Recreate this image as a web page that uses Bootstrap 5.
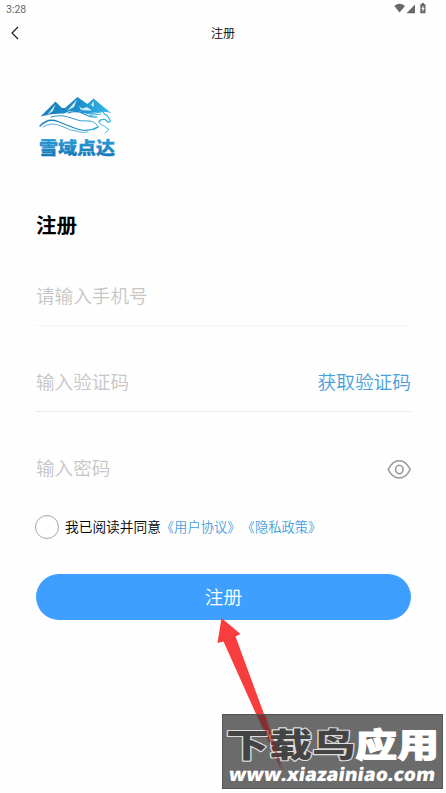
<!DOCTYPE html>
<html lang="zh-CN">
<head>
<meta charset="utf-8">
<meta name="viewport" content="width=device-width, initial-scale=1">
<title>注册</title>
<link href="https://cdn.jsdelivr.net/npm/bootstrap@5.3.0/dist/css/bootstrap.min.css" rel="stylesheet">
<style>
body{font-family:"Noto Sans CJK SC",sans-serif;font-weight:350;background:#fefefe;color:#000;height:793px;overflow:hidden}
.status{height:17px;padding:0 18px 0 6px;font:10.5px/18px Roboto,sans-serif;color:#686868}
.status span{padding-top:2px}
.topbar{height:32px;padding:0 9px}
.topbar .back,.topbar .spacer{width:12px}
.topbar h1{font-size:12px;line-height:32px;font-weight:350}
.page{padding:46px 35px 0 36px}
.brand{width:82px;height:66px}
.title{font-size:20.5px;line-height:30px;font-weight:700;margin-top:48px}
.field{height:86px;border-bottom:1px solid #f4f4f4;padding-top:41px}
.field.first{margin-top:1px}
.field.code{border-color:#e8e8e8}
.field.pass{border-color:#fafafa}
.field input{font-size:18.6px;line-height:28px;height:28px;color:#333;font-weight:350}
.field input::placeholder{color:#c6c6c6;opacity:1}
.send{font-size:18.7px;line-height:28px;color:#479fdb}
.agree{font-size:13.7px;line-height:22px;height:24px;margin-top:17px;font-kerning:none;font-feature-settings:"chws" 0,"halt" 0;text-spacing-trim:space-all}
.agree input{width:24px;height:24px;margin:0 6px 0 -1px;border:1px solid #a5a5a5;background:#fff}
.agree label{padding-bottom:2px}
.agree .term{display:inline-block;color:#479fdb;font-size:13.3px}
.agree .term+.term{margin-left:1px}
.submit{height:46px;margin:35px 0 0;padding:0 0 2px;background:#3e9fff;color:#fff;font-size:18.7px;line-height:28px;font-weight:350}
.submit:hover{background:#3494f4;color:#fff}
.pointer{left:210px;top:610px;width:80px;height:170px;pointer-events:none}
.watermark{left:222px;top:714px;width:221px;height:75px;background:rgba(70,70,70,.8);border:1px solid #555}
</style>
<script src="https://cdn.jsdelivr.net/npm/bootstrap@5.3.0/dist/js/bootstrap.bundle.min.js"></script>
</head>
<body class="position-relative">
<header>
  <div class="status d-flex justify-content-between align-items-center">
    <span>3:28</span>
    <svg width="34" height="13" viewBox="0 0 34 13" fill="#686868">
      <path d="M.3 4Q5.6-.4 11 4L5.6 10.5ZM12.5 11.2 21 2.5v8.7ZM26.3 2.2h1.4V1h2.3v1.2h1.5v9h-5.2Z"/>
      <path d="M29.4 3.5 27.3 7h1.3v3l2-3.8h-1.2Z" fill="#fff"/>
    </svg>
  </div>
  <nav class="topbar d-flex justify-content-between align-items-center">
    <svg class="back" height="14" viewBox="0 0 12 14" fill="none" stroke="#111" stroke-width="1.1"><path d="M9 1 3 7l6 6"/></svg>
    <h1 class="m-0">注册</h1>
    <span class="spacer"></span>
  </nav>
</header>
<main class="page">
  <svg class="brand d-block" viewBox="36 95 82 66">
    <defs>
      <linearGradient id="sky" gradientUnits="userSpaceOnUse" x1="40" y1="0" x2="114" y2="0"><stop offset="0" stop-color="#1a80bf"/><stop offset=".5" stop-color="#1b8cca"/><stop offset="1" stop-color="#36bee9"/></linearGradient>
      <linearGradient id="word" x1="0" y1="0" x2="0" y2="1"><stop offset="0" stop-color="#35aade"/><stop offset="1" stop-color="#126eb4"/></linearGradient>
    </defs>
    <g fill="url(#sky)">
      <path d="M40.500 116.500 55.500 101.500 62 108 65 108 77.500 97 87.500 104 93.500 98.500 111 113Q104 111 98 112L84 114Q74 108 64 113.500Q53 113 40.500 116.500Z"/>
    </g>
    <g fill="#fff">
      <path d="M55.500 104 53 111 47 115 53 107.500ZM77 99.500 74 107 67 111 73 104ZM79 106 82 108.500 87 107 92 110.500 86 110.500 81 110ZM93.500 101 94 107 91 105Z" opacity=".8"/>
      <path d="M71 111.500Q79 110 86 113.500L98 112.500 104 112 108 115.500V123H71Z"/>
    </g>
    <g fill="none" stroke="url(#sky)" stroke-linecap="round" stroke-linejoin="round">
      <path d="M51 117Q62 114 71 118T90 121Q96 122 98 127" stroke-width=".9"/>
      <path d="M40 126Q48 117.500 58 121.500T77 129Q88 132.500 98 127" stroke-width="1.300"/>
      <path d="M43 127Q52 121.500 61 126T80 132Q84 133 88 132" stroke-width=".7"/>
      <path d="M68 113Q77 110 84 114T97 117M73 110.500Q83 112 90 114L103 111.500 104 113.500 107.500 116 110.500 121 108.500 122.500 105 119.500Q100 119 99 122" stroke-width="1.200"/>
      <path d="M99 122Q100 125 104 126L109 129.500 105 133M98 127 94 130M90 115.500 101 114" stroke-width=".9"/>
    </g>
    <text x="39" y="154.200" textLength="76" lengthAdjust="spacingAndGlyphs" font-family="Noto Sans CJK SC, sans-serif" font-size="17.500" font-weight="900" fill="url(#word)" stroke="url(#word)" stroke-width=".3">雪域点达</text>
  </svg>
  <h2 class="title mb-0">注册</h2>
  <form>
    <div class="field first d-flex align-items-start"><input class="form-control-plaintext p-0" type="tel" placeholder="请输入手机号"></div>
    <div class="field code d-flex align-items-start">
      <input class="form-control-plaintext p-0 flex-grow-1" type="text" placeholder="输入验证码">
      <a class="send text-nowrap text-decoration-none" href="#">获取验证码</a>
    </div>
    <div class="field pass d-flex align-items-start">
      <input class="form-control-plaintext p-0 flex-grow-1" type="password" placeholder="输入密码">
      <svg class="flex-shrink-0 mt-1" width="24" height="22" viewBox="0 0 24 22" fill="none" stroke="#999" stroke-width="1.600"><path d="M1.200 12.500Q5.500 3.700 12.200 3.700T23.200 12.500Q19 21 12.200 21T1.200 12.500Z"/><ellipse cx="12.300" cy="12.500" rx="3.700" ry="4.200"/></svg>
    </div>
    <div class="agree d-flex align-items-center">
      <input class="form-check-input rounded-circle flex-shrink-0" type="checkbox" id="ok">
      <label for="ok" class="text-nowrap">我已阅读并同意<span class="term">《用户协议》</span><span class="term">《隐私政策》</span></label>
    </div>
    <button class="submit btn w-100 rounded-pill border-0" type="button">注册</button>
  </form>
</main>
<svg class="pointer position-absolute" viewBox="210 610 80 170"><path d="M221.500 618 240.500 634 235.500 636.500 264 714 282 772 256 714 223.500 641.500 217.500 643Z" fill="#f73d3d"/></svg>
<svg class="watermark position-absolute" viewBox="222 714 221 75">
  <g font-family="Noto Sans CJK SC, sans-serif" font-weight="900" font-size="34" paint-order="stroke" stroke-linejoin="round">
    <text x="223" y="757" textLength="133" lengthAdjust="spacingAndGlyphs" fill="#444" stroke="#ddd" stroke-width="2.200">下载鸟</text>
    <text x="356" y="757" textLength="86" lengthAdjust="spacingAndGlyphs" fill="#fff" stroke="#fff" stroke-width="1">应用</text>
  </g>
  <path d="M256 714 264 714 282 772Z" fill="#a01c1c" opacity=".55"/>
  <text x="226" y="782" textLength="212" lengthAdjust="spacingAndGlyphs" font-family="Open Sans, sans-serif" font-weight="800" font-size="19" fill="#fff" transform="translate(117.500 0) skewX(-8.600)">www.xiazainiao.com</text>
</svg>
</body>
</html>
